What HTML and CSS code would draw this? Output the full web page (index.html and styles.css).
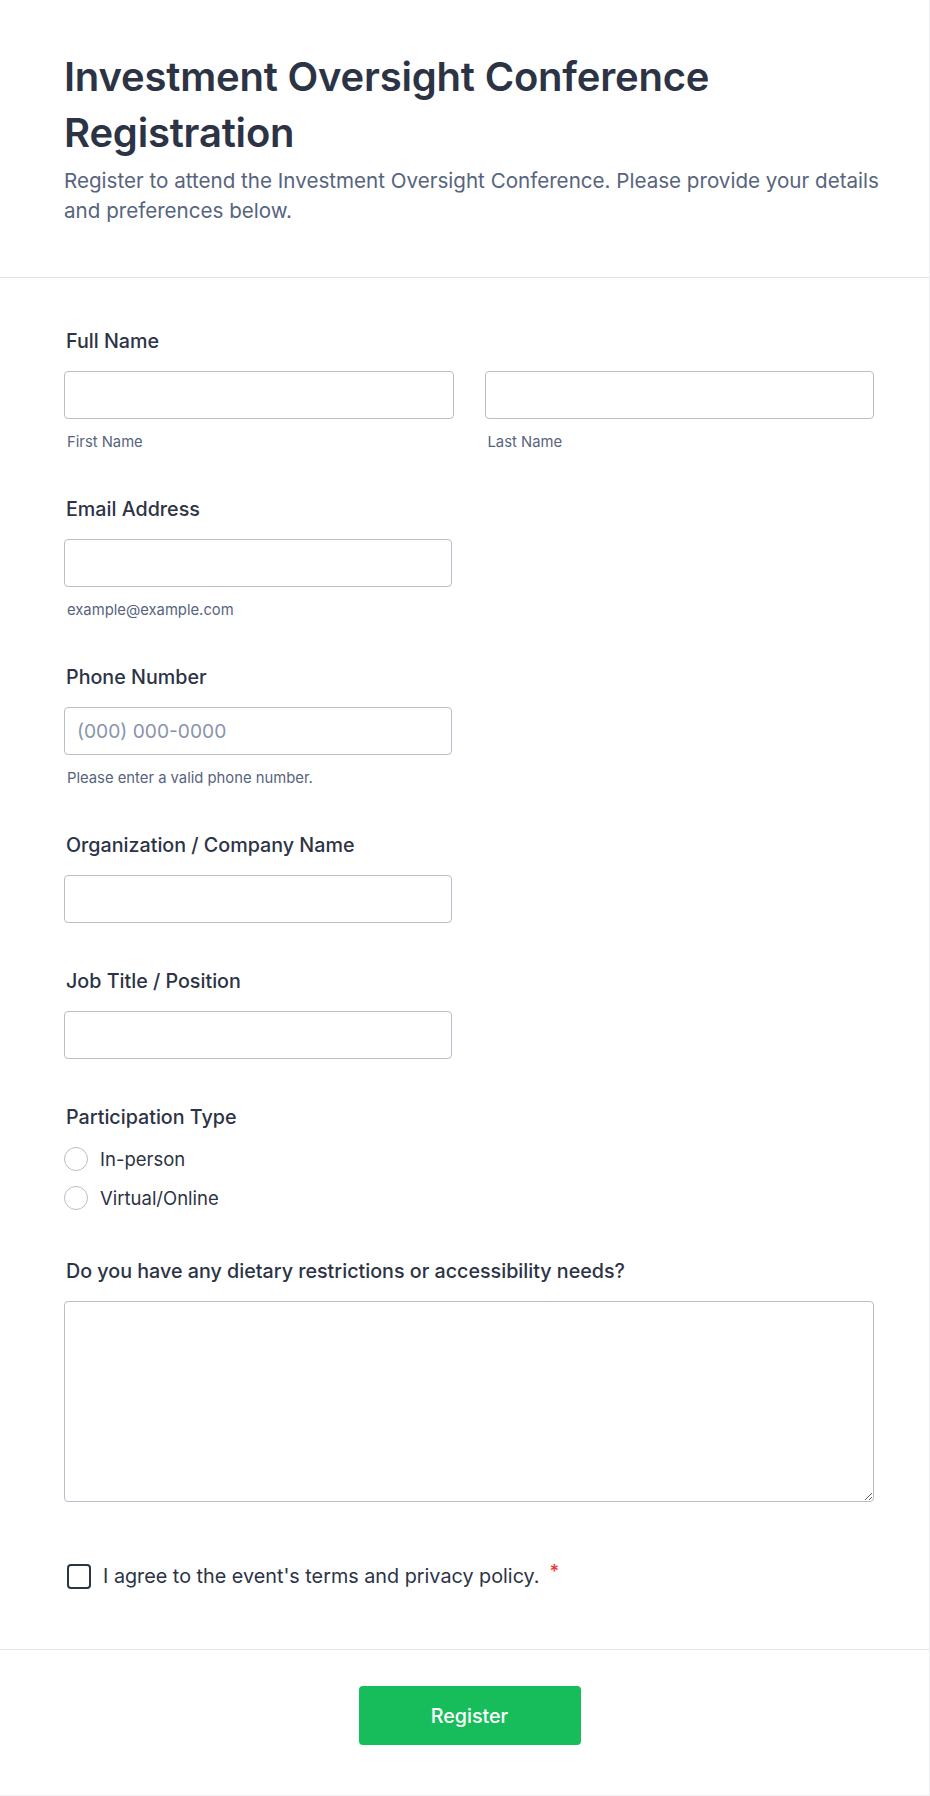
FILE: index.html
```html
<!DOCTYPE html>
<html lang="en">
<head>
<meta charset="utf-8">
<title>Investment Oversight Conference Registration</title>
<link rel="stylesheet" href="styles.css">
</head>
<body>
<form class="form">
  <header class="form-header">
    <h1 class="form-title">Investment Oversight Conference Registration</h1>
    <p class="form-desc">Register to attend the Investment Oversight Conference. Please provide your details and preferences below.</p>
  </header>

  <div class="fields">
    <div class="field">
      <label class="field-label">Full Name</label>
      <div class="name-row">
        <div class="name-col">
          <input class="input" type="text">
          <span class="sublabel">First Name</span>
        </div>
        <div class="name-col">
          <input class="input" type="text">
          <span class="sublabel">Last Name</span>
        </div>
      </div>
    </div>

    <div class="field">
      <label class="field-label">Email Address</label>
      <input class="input input-half" type="email">
      <span class="sublabel">example@example.com</span>
    </div>

    <div class="field">
      <label class="field-label">Phone Number</label>
      <input class="input input-half" type="tel" placeholder="(000) 000-0000">
      <span class="sublabel">Please enter a valid phone number.</span>
    </div>

    <div class="field">
      <label class="field-label">Organization / Company Name</label>
      <input class="input input-half" type="text">
    </div>

    <div class="field">
      <label class="field-label">Job Title / Position</label>
      <input class="input input-half" type="text">
    </div>

    <div class="field">
      <label class="field-label">Participation Type</label>
      <div class="options">
        <label class="option"><span class="radio"></span><span class="option-text">In-person</span></label>
        <label class="option"><span class="radio"></span><span class="option-text">Virtual/Online</span></label>
      </div>
    </div>

    <div class="field">
      <label class="field-label">Do you have any dietary restrictions or accessibility needs?</label>
      <textarea class="textarea"></textarea>
    </div>

    <div class="field field-agree">
      <label class="agree">
        <span class="checkbox"></span>
        <span class="agree-text">I agree to the event's terms and privacy policy.</span>
        <span class="required">*</span>
      </label>
    </div>
  </div>

  <div class="form-footer">
    <button class="submit" type="button">Register</button>
  </div>
</form>
</body>
</html>
```

FILE: styles.css
```css
* {
  box-sizing: border-box;
}

html, body {
  margin: 0;
  padding: 0;
  background: #ffffff;
}

body {
  font-family: Inter, "Noto Sans", "Liberation Sans", sans-serif;
  color: #2c3345;
}

.form {
  width: 930px;
  min-height: 1796px;
  border-right: 1px solid #eef0f4;
  border-bottom: 1px solid #eef0f4;
}

.form-header {
  padding: 49px 30px 51px 64px;
  border-bottom: 1px solid #dfe1e8;
}

.form-title {
  margin: 0;
  font-size: 40px;
  line-height: 56px;
  font-weight: 600;
  color: #2c3345;
  letter-spacing: -0.2px;
}

.form-desc {
  margin: 5px 0 0;
  font-size: 20.6px;
  line-height: 30px;
  color: #57647e;
}

.fields {
  padding: 27px 55px 36px 64px;
}

.field {
  display: flex;
  flex-direction: column;
  padding: 22px 0 22px;
}

.field-label {
  font-size: 19.7px;
  line-height: 28px;
  font-weight: 500;
  color: #2c3345;
  margin-bottom: 16px;
  padding-left: 2px;
}

.name-row {
  display: flex;
  gap: 31px;
}

.name-col {
  flex: 1;
  display: flex;
  flex-direction: column;
}

.input {
  height: 48px;
  width: 100%;
  border: 1px solid #b8bdc9;
  border-radius: 4px;
  padding: 0 12px;
  font-family: inherit;
  font-size: 19.2px;
  color: #2c3345;
  background: #ffffff;
}

.input::placeholder {
  color: #8894ab;
}

.input-half {
  width: 388px;
}

.sublabel {
  margin-top: 14px;
  font-size: 14.8px;
  line-height: 18px;
  color: #57647e;
  padding-left: 3px;
}

.options {
  display: flex;
  flex-direction: column;
  gap: 15px;
  margin-top: 0;
  margin-bottom: 3px;
}

.option {
  display: flex;
  align-items: center;
  gap: 12px;
  height: 24px;
}

.radio {
  width: 24px;
  height: 24px;
  border: 1px solid #b8bdc9;
  border-radius: 50%;
  background: #ffffff;
  flex: none;
}

.option-text {
  font-size: 18.5px;
  line-height: 24px;
  color: #2c3345;
}

.textarea {
  display: block;
  width: 100%;
  height: 201px;
  border: 1px solid #b8bdc9;
  border-radius: 4px;
  padding: 12px;
  font-family: inherit;
  font-size: 18px;
  resize: vertical;
}

.field-agree {
  padding-top: 39px;
  padding-bottom: 23px;
}

.agree {
  display: flex;
  align-items: flex-start;
}

.checkbox {
  width: 24px;
  height: 25px;
  margin: 1px 12px 0 3px;
  border: 2px solid #2c3345;
  border-radius: 4px;
  flex: none;
}

.agree-text {
  font-size: 19.8px;
  line-height: 27px;
  color: #2c3345;
}

.required {
  margin-left: 10px;
  color: #f23a3c;
  font-size: 18px;
  line-height: 18px;
  font-weight: 600;
}

.form-footer {
  border-top: 1px solid #e3e5ea;
  padding: 36px 54px 48px 64px;
  display: flex;
  justify-content: center;
}

.submit {
  width: 222px;
  height: 59px;
  border: none;
  border-radius: 4px;
  background: #18bd5b;
  color: #ffffff;
  font-family: inherit;
  font-size: 19.7px;
  font-weight: 500;
}
```
